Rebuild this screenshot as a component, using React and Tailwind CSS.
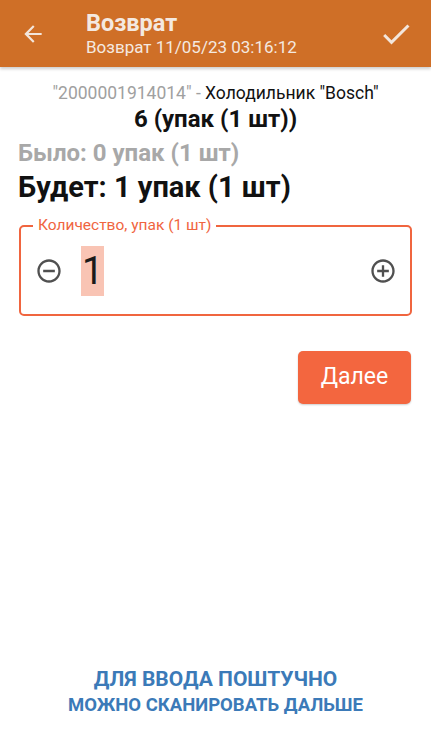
import { useState } from "react";

export default function App() {
  const [qty, setQty] = useState(1);

  return (
    <div
      className="h-[739px] w-[431px] bg-white flex flex-col overflow-hidden"
      style={{ fontFamily: "Roboto, 'Noto Sans', sans-serif" }}
    >
      {/* HEADER */}
      <div className="h-[67px] bg-[#cf6f27] flex items-center shadow-[0_2px_3px_rgba(0,0,0,0.2)] shrink-0">
        <button className="w-[66px] h-full flex items-center justify-center">
          <svg width="26" height="26" viewBox="0 0 24 24" fill="#f3e6dc">
            <path d="M20 11H7.83l5.59-5.59L12 4l-8 8 8 8 1.41-1.41L7.83 13H20v-2z" />
          </svg>
        </button>
        <div className="flex-1 pl-[20px] text-[#f4e9e0]">
          <div className="text-[23.5px] font-bold leading-[26px]">Возврат</div>
          <div className="text-[17px] leading-[20px] mt-[1px]">Возврат 11/05/23 03:16:12</div>
        </div>
        <button className="w-[60px] h-full flex items-center justify-center pr-[10px]">
          <svg width="36" height="36" viewBox="0 0 24 24" fill="#f3e6dc">
            <path d="M9 16.17L4.83 12l-1.42 1.41L9 19 21 7l-1.41-1.41z" />
          </svg>
        </button>
      </div>

      {/* INFO */}
      <div className="flex flex-col items-center pt-[15px]">
        <div className="text-[17.5px] leading-[22px] whitespace-nowrap">
          <span className="text-[#a0a0a0]">"2000001914014" - </span>
          <span className="text-[#111]">Холодильник "Bosch"</span>
        </div>
        <div className="text-[24px] font-bold leading-[26px] text-[#111] mt-[2px]">6 (упак (1 шт))</div>
      </div>
      <div className="px-[18px] mt-[6px]">
        <div className="text-[24px] font-bold leading-[30px] text-[#a8a8a8]">Было: 0 упак (1 шт)</div>
        <div className="text-[29px] font-bold leading-[34px] text-[#111] mt-[2px]">Будет: {qty} упак (1 шт)</div>
      </div>

      {/* FIELD */}
      <div className="px-[19px] mt-[21px]">
        <div className="relative h-[91px] border-2 border-[#f0653f] rounded-[5px] flex items-center">
          <span className="absolute -top-[11px] left-[12px] bg-white px-[5px] text-[15.5px] leading-[18px] text-[#f0653f] whitespace-nowrap">
            Количество, упак (1 шт)
          </span>
          <button onClick={() => setQty(q => Math.max(0, q - 1))} className="ml-[14px] w-[28px] h-[28px] flex items-center justify-center">
            <svg width="28" height="28" viewBox="0 0 24 24" fill="#505050">
              <path d="M7 11v2h10v-2H7zm5-9C6.48 2 2 6.480 2 12s4.48 10 10 10 10-4.48 10-10S17.52 2 12 2zm0 18c-4.41 0-8-3.59-8-8s3.59-8 8-8 8 3.59 8 8-3.59 8-8 8z" />
            </svg>
          </button>
          <div className="flex-1 pl-[18px]">
            <span className="inline-block bg-[#f9c4b4] text-[38px] leading-[50px] text-[#1a1a1a] px-[1px]">{qty}</span>
          </div>
          <button onClick={() => setQty(q => q + 1)} className="mr-[13px] w-[28px] h-[28px] flex items-center justify-center">
            <svg width="28" height="28" viewBox="0 0 24 24" fill="#505050">
              <path d="M13 7h-2v4H7v2h4v4h2v-4h4v-2h-4V7zm-1-5C6.48 2 2 6.48 2 12s4.48 10 10 10 10-4.48 10-10S17.52 2 12 2zm0 18c-4.41 0-8-3.59-8-8s3.59-8 8-8 8 3.59 8 8-3.59 8-8 8z" />
            </svg>
          </button>
        </div>
      </div>

      {/* BUTTON */}
      <div className="flex justify-end pr-[20px] mt-[35px]">
        <button className="w-[113px] h-[53px] rounded-[5px] bg-[#f3663f] text-white text-[23px] shadow-[0_1px_2px_rgba(0,0,0,0.2)]">
          Далее
        </button>
      </div>

      <div className="flex-1" />

      {/* FOOTER */}
      <div className="flex flex-col items-center pb-[21px] text-[#3b7ab8] font-bold whitespace-nowrap">
        <div className="text-[21px] leading-[26px]">ДЛЯ ВВОДА ПОШТУЧНО</div>
        <div className="text-[18.5px] leading-[26px]">МОЖНО СКАНИРОВАТЬ ДАЛЬШЕ</div>
      </div>
    </div>
  );
}
